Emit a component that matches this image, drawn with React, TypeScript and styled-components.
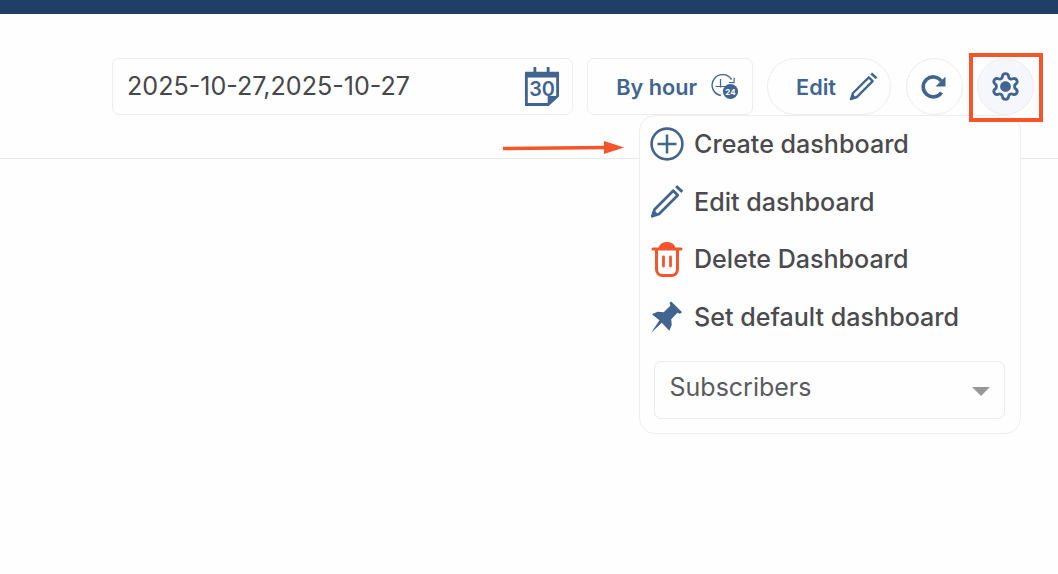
import React from 'react';
import styled, { createGlobalStyle } from 'styled-components';
import { Settings } from 'lucide-react';

const GlobalStyle = createGlobalStyle`
  html, body { margin: 0; padding: 0; background: #fefefe; }
  body { font-family: Inter, "Liberation Sans", sans-serif; overflow: hidden; }
`;

const blue = '#41658f';
const orange = '#f4552d';

const Page = styled.div`
  position: relative;
  width: 1058px;
  height: 574px;
  overflow: hidden;
  background: #fefefe;
`;

const TopBar = styled.div`
  height: 14px;
  background: #1f3f68;
`;

const Header = styled.header`
  display: flex;
  justify-content: flex-end;
  align-items: flex-start;
  gap: 14.5px;
  height: 145px;
  box-sizing: border-box;
  padding: 44px 24px 0 0;
  border-bottom: 1px solid #e9e8ea;
`;

const DateField = styled.div`
  display: flex;
  align-items: center;
  justify-content: space-between;
  box-sizing: border-box;
  width: 460.5px;
  height: 57px;
  padding: 0 12px 0 14px;
  border: 1px solid #efecef;
  border-radius: 7px;
  color: #47474b;
  font-size: 25.1px;
  line-height: 1;
  font-weight: 400;
`;

const GhostButton = styled.button<{ $width: number; $round?: boolean; $active?: boolean; $shift?: boolean }>`
  display: flex;
  align-items: center;
  justify-content: center;
  gap: 13px;
  box-sizing: border-box;
  width: ${(p) => p.$width}px;
  height: 57px;
  padding: 0 0 0 ${(p) => (p.$shift ? '16px' : '0')};
  border: 1px solid #efecef;
  border-radius: ${(p) => (p.$round ? '29px' : '7px')};
  background: ${(p) => (p.$active ? '#f6f7fc' : '#fefefe')};
  color: ${blue};
  font-family: inherit;
  font-size: 21.7px;
  font-weight: 600;
`;

const Menu = styled.div`
  position: absolute;
  top: 115px;
  left: 639px;
  box-sizing: border-box;
  width: 382px;
  height: 319px;
  padding: 0 15px 0 10px;
  background: #fefefe;
  border: 1px solid #efeeef;
  border-radius: 16px;
`;

const MenuList = styled.div`
  display: flex;
  flex-direction: column;
  margin-top: -0.6px;
  margin-bottom: 15.6px;
`;

const MenuItem = styled.div`
  display: flex;
  align-items: center;
  gap: 10px;
  height: 57.5px;
  color: #4a4a4f;
  font-size: 25.1px;
  font-weight: 500;
  white-space: nowrap;
`;

const IconSlot = styled.span`
  display: flex;
  align-items: center;
  justify-content: center;
  width: 34px;
  height: 36px;
`;

const SelectBox = styled.div`
  display: flex;
  align-items: center;
  justify-content: space-between;
  box-sizing: border-box;
  height: 58px;
  margin-left: 4px;
  padding: 0 14px 6px 14.5px;
  border: 1px solid #ebeaec;
  border-radius: 7px;
  color: #5b5a5e;
  font-size: 25px;
`;

const Caret = styled.span`
  width: 0;
  height: 0;
  margin-top: 8px;
  border-left: 9px solid transparent;
  border-right: 9px solid transparent;
  border-top: 9px solid #99979a;
`;

const Highlight = styled.div`
  position: absolute;
  top: 53px;
  left: 969px;
  box-sizing: border-box;
  width: 74px;
  height: 69px;
  border: 4px solid ${orange};
`;

const Arrow = styled.svg`
  position: absolute;
  top: 136px;
  left: 500px;
`;

const GearGlyph = styled(Settings)`
  display: block;
`;

const CalendarIcon = () => (
  <svg width="36" height="41" viewBox="0 0 38 42">
    <path d="M10 0.500h3v6h-3zM24 0.500h3v6h-3z" fill={blue} />
    <path d="M1 5.500h36v6h-36z" fill={blue} />
    <path d="M2.500 8v32h23l10-9v-23" fill="none" stroke={blue} strokeWidth="3" />
    <path d="M25 40v-9h11z" fill={blue} />
    <text x="5.500" y="31" fill={blue} fontFamily="Inter, sans-serif" fontSize="21" fontWeight="600">30</text>
  </svg>
);

const ClockIcon = () => (
  <svg width="29" height="28" viewBox="0 0 29 28">
    <path d="M21.500 6.500A10.500 10.500 0 1 0 11 22.500" fill="none" stroke={blue} strokeWidth="1.400" />
    <path d="M10.500 6v8.500M5.500 13.500h10" fill="none" stroke={blue} strokeWidth="1.200" />
    <path d="M19 9.500l5 .2.200-5" fill="none" stroke={blue} strokeWidth="1.200" />
    <circle cx="20.500" cy="18.500" r="7.600" fill={blue} />
    <text x="20.500" y="21.500" fill="#fff" textAnchor="middle" fontFamily="Inter, sans-serif" fontSize="8" fontWeight="700">24</text>
  </svg>
);

const PencilIcon = ({ size }: { size: number }) => (
  <svg width={size} height={size} viewBox="0 0 30 30">
    <path d="M20.500 5.500l4 4L8 26l-6 2 2-6z" fill="none" stroke={blue} strokeWidth="2.400" strokeLinejoin="round" />
    <path d="M3.500 22.500l4 4-5.500 1.500z" fill={blue} />
    <path d="M23 1.500l5.500 5" fill="none" stroke={blue} strokeWidth="2.600" />
  </svg>
);

const RefreshIcon = () => (
  <svg width="26" height="26" viewBox="0 0 26 26">
    <path d="M20.500 18.500a10 10 0 1 1-.2-11.500" fill="none" stroke={blue} strokeWidth="3.600" />
    <path d="M24.500 2.500v10h-10z" fill={blue} />
  </svg>
);

const GearIcon = () => (
  <GearGlyph size={31} color={blue} strokeWidth={2.200}>
    <circle cx="12" cy="12" r="3.900" fill={blue} stroke="none" />
  </GearGlyph>
);

const PlusCircleIcon = () => (
  <svg width="34" height="34" viewBox="0 0 34 34">
    <circle cx="17" cy="17" r="15.400" fill="none" stroke={blue} strokeWidth="2.600" />
    <path d="M17 7.500v19M7.500 17h19" fill="none" stroke={blue} strokeWidth="2.500" />
  </svg>
);

const TrashIcon = () => (
  <svg width="32" height="36" viewBox="0 0 32 36">
    <path d="M7.500 8C7.500 -1.500 24.500 -1.500 24.500 8z" fill={orange} />
    <path d="M2 8h28" stroke={orange} strokeWidth="3" strokeLinecap="round" />
    <path d="M5.500 8v20c0 4 2.500 6.500 6 6.500h9c3.500 0 6-2.500 6-6.500V8" fill="none" stroke={orange} strokeWidth="3" />
    <path d="M12.500 16v9M19.500 16v9" stroke={orange} strokeWidth="2.800" strokeLinecap="round" />
  </svg>
);

const PinIcon = () => (
  <svg width="36" height="36" viewBox="0 0 36 36">
    <path
      d="M22.500 1.500L34 13l-2.500 1.500-2.500-1-6.500 7 .5 6-2.500 6-8-8.500L1 35l9-13.500L2 15l6-2.500 6.500.5 7-7-.8-3z"
      fill={blue}
    />
  </svg>
);

const menuItems = [
  { label: 'Create dashboard', icon: <PlusCircleIcon /> },
  { label: 'Edit dashboard', icon: <PencilIcon size={35} /> },
  { label: 'Delete Dashboard', icon: <TrashIcon /> },
  { label: 'Set default dashboard', icon: <PinIcon /> },
];

const App = () => {
  return (
    <Page>
      <GlobalStyle />
      <TopBar />
      <Header>
        <DateField>
          2025-10-27,2025-10-27
          <CalendarIcon />
        </DateField>
        <GhostButton $width={165.5} $shift>
          By hour
          <ClockIcon />
        </GhostButton>
        <GhostButton $width={124} $round $shift>
          Edit
          <PencilIcon size={29} />
        </GhostButton>
        <GhostButton $width={57} $round>
          <RefreshIcon />
        </GhostButton>
        <GhostButton $width={57} $round $active>
          <GearIcon />
        </GhostButton>
      </Header>
      <Menu>
        <MenuList>
          {menuItems.map((item) => (
            <MenuItem key={item.label}>
              <IconSlot>{item.icon}</IconSlot>
              {item.label}
            </MenuItem>
          ))}
        </MenuList>
        <SelectBox>
          Subscribers
          <Caret />
        </SelectBox>
      </Menu>
      <Highlight />
      <Arrow width="125" height="24" viewBox="0 0 125 24">
        <path d="M3 12.500L105 11.500" stroke={orange} strokeWidth="3.500" />
        <path d="M104 5l20 6.500-20 6.500z" fill={orange} />
      </Arrow>
    </Page>
  );
};

export default App;
